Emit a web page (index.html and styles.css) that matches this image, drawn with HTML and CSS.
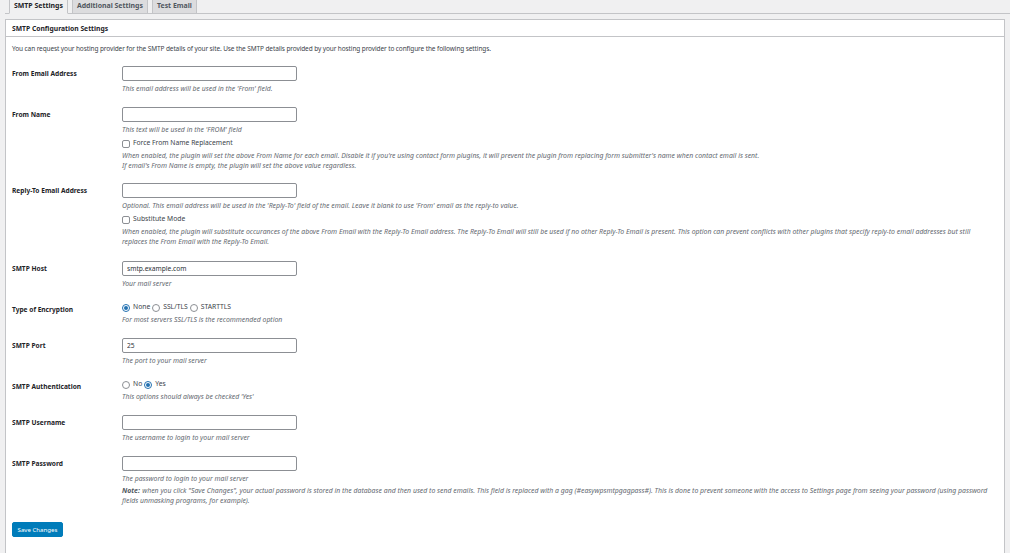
FILE: index.html
```html
<!DOCTYPE html>
<html lang="en">
<head>
<meta charset="utf-8">
<title>SMTP Settings</title>
<link rel="stylesheet" href="styles.css">
</head>
<body>
<nav class="tabs">
  <a class="tab tab-active">SMTP Settings</a>
  <a class="tab">Additional Settings</a>
  <a class="tab">Test Email</a>
</nav>
<section class="panel">
  <h3 class="panel-title">SMTP Configuration Settings</h3>
  <div class="panel-body">
    <p class="intro">You can request your hosting provider for the SMTP details of your site. Use the SMTP details provided by your hosting provider to configure the following settings.</p>
    <div class="row">
      <label class="label">From Email Address</label>
      <div class="field">
        <input class="input" type="text">
        <p class="desc">This email address will be used in the 'From' field.</p>
      </div>
    </div>
    <div class="row row-tight">
      <label class="label">From Name</label>
      <div class="field">
        <input class="input" type="text">
        <p class="desc">This text will be used in the 'FROM' field</p>
        <label class="choice choice-block"><span class="box"></span>Force From Name Replacement</label>
        <p class="desc">When enabled, the plugin will set the above From Name for each email. Disable it if you're using contact form plugins, it will prevent the plugin from replacing form submitter's name when contact email is sent.<br>If email's From Name is empty, the plugin will set the above value regardless.</p>
      </div>
    </div>
    <div class="row row-loose">
      <label class="label">Reply-To Email Address</label>
      <div class="field">
        <input class="input" type="text">
        <p class="desc">Optional. This email address will be used in the 'Reply-To' field of the email. Leave it blank to use 'From' email as the reply-to value.</p>
        <label class="choice choice-block"><span class="box"></span>Substitute Mode</label>
        <p class="desc">When enabled, the plugin will substitute occurances of the above From Email with the Reply-To Email address. The Reply-To Email will still be used if no other Reply-To Email is present. This option can prevent conflicts with other plugins that specify reply-to email addresses but still replaces the From Email with the Reply-To Email.</p>
      </div>
    </div>
    <div class="row">
      <label class="label">SMTP Host</label>
      <div class="field">
        <input class="input" type="text" value="smtp.example.com">
        <p class="desc">Your mail server</p>
      </div>
    </div>
    <div class="row">
      <label class="label">Type of Encryption</label>
      <div class="field">
        <div class="choices">
          <label class="choice"><span class="radio radio-on"></span>None</label>
          <label class="choice"><span class="radio"></span>SSL/TLS</label>
          <label class="choice"><span class="radio"></span>STARTTLS</label>
        </div>
        <p class="desc">For most servers SSL/TLS is the recommended option</p>
      </div>
    </div>
    <div class="row">
      <label class="label">SMTP Port</label>
      <div class="field">
        <input class="input" type="text" value="25">
        <p class="desc">The port to your mail server</p>
      </div>
    </div>
    <div class="row">
      <label class="label">SMTP Authentication</label>
      <div class="field">
        <div class="choices">
          <label class="choice"><span class="radio"></span>No</label>
          <label class="choice"><span class="radio radio-on"></span>Yes</label>
        </div>
        <p class="desc">This options should always be checked 'Yes'</p>
      </div>
    </div>
    <div class="row">
      <label class="label">SMTP Username</label>
      <div class="field">
        <input class="input" type="text">
        <p class="desc">The username to login to your mail server</p>
      </div>
    </div>
    <div class="row">
      <label class="label">SMTP Password</label>
      <div class="field">
        <input class="input" type="password">
        <p class="desc">The password to login to your mail server</p>
        <p class="desc desc-note"><b>Note:</b> when you click "Save Changes", your actual password is stored in the database and then used to send emails. This field is replaced with a gag (#easywpsmtpgagpass#). This is done to prevent someone with the access to Settings page from seeing your password (using password fields unmasking programs, for example).</p>
      </div>
    </div>
    <button class="save" type="button">Save Changes</button>
  </div>
</section>
</body>
</html>
```
FILE: styles.css
```css
* { box-sizing: border-box; }
html, body { height: 100%; }
body {
  margin: 0;
  padding: 0 5px;
  background: #f0f0f1;
  color: #3c434a;
  font-family: "Noto Sans", "Open Sans", sans-serif;
  font-size: 6.9px;
  line-height: 10px;
  overflow: hidden;
}
.tabs {
  display: flex;
  gap: 4px;
  height: 14px;
  padding-left: 4px;
  margin-right: -5px;
  border-bottom: 1px solid #c3c4c7;
}
.tab {
  height: 14px;
  padding: 0 4px;
  border: 1px solid #c3c4c7;
  border-top: 0;
  background: #dcdcde;
  color: #50575e;
  font-weight: 700;
  font-size: 6.95px;
  line-height: 12px;
}
.tab-active {
  background: #f0f0f1;
  border-bottom-color: #f0f0f1;
  color: #1d2327;
}
.panel {
  margin-top: 5px;
  height: 560px;
  background: #fff;
  border: 1px solid #c3c4c7;
}
.panel-title {
  margin: 0;
  height: 17px;
  padding-left: 6px;
  border-bottom: 1px solid #c3c4c7;
  color: #1d2327;
  font-size: 6.75px;
  line-height: 17px;
  font-weight: 700;
}
.panel-body { padding: 7px 6px 0; }
.intro {
  margin: 0 0 12px;
  height: 10px;
  font-size: 6.5px;
  letter-spacing: -0.105px;
}
.row {
  display: grid;
  grid-template-columns: 110px 1fr;
  padding-bottom: 13px;
}
.row-tight { padding-bottom: 12px; }
.row-loose { padding-bottom: 14px; }
.label {
  padding-top: 1px;
  color: #1d2327;
  font-size: 6.6px;
  font-weight: 700;
  line-height: 14px;
}
.field { min-width: 0; }
.input {
  display: block;
  width: 175px;
  height: 15px;
  margin: 0;
  padding: 0 4px;
  background: #fff;
  border: 1px solid #8c8f94;
  border-radius: 2px;
  color: #2c3338;
  font: 6.65px "Noto Sans", "Open Sans", sans-serif;
}
.desc {
  margin: 3px 0 0;
  color: #646970;
  font-style: italic;
  font-size: 6.9px;
  line-height: 10px;
  padding-right: 8px;
}
.desc b { color: #50575e; margin-right: 0.5px; }
.desc-note { margin-top: 2px; }
.choices {
  display: flex;
  gap: 2px;
  height: 10px;
  align-items: center;
}
.choice {
  display: inline-flex;
  align-items: center;
  gap: 3px;
  color: #3c434a;
  font-size: 6.75px;
}
.choice-block {
  display: flex;
  height: 10px;
  margin-top: 3px;
}
.box, .radio {
  flex: none;
  width: 8px;
  height: 8px;
  margin-top: 1px;
  background: #fff;
  border: 1px solid #8c8f94;
}
.box { border-radius: 2px; }
.radio { border-radius: 50%; position: relative; }
.radio-on { border-color: #2271b1; }
.radio-on::before {
  content: "";
  position: absolute;
  inset: 1px;
  border-radius: 50%;
  background: #2271b1;
}
.save {
  display: block;
  width: 51px;
  height: 15px;
  margin-top: 3px;
  padding: 0;
  background: #007cba;
  border: 1px solid #007cba;
  border-radius: 2px;
  color: #fff;
  font: 6.1px "Noto Sans", "Open Sans", sans-serif;
}
```
